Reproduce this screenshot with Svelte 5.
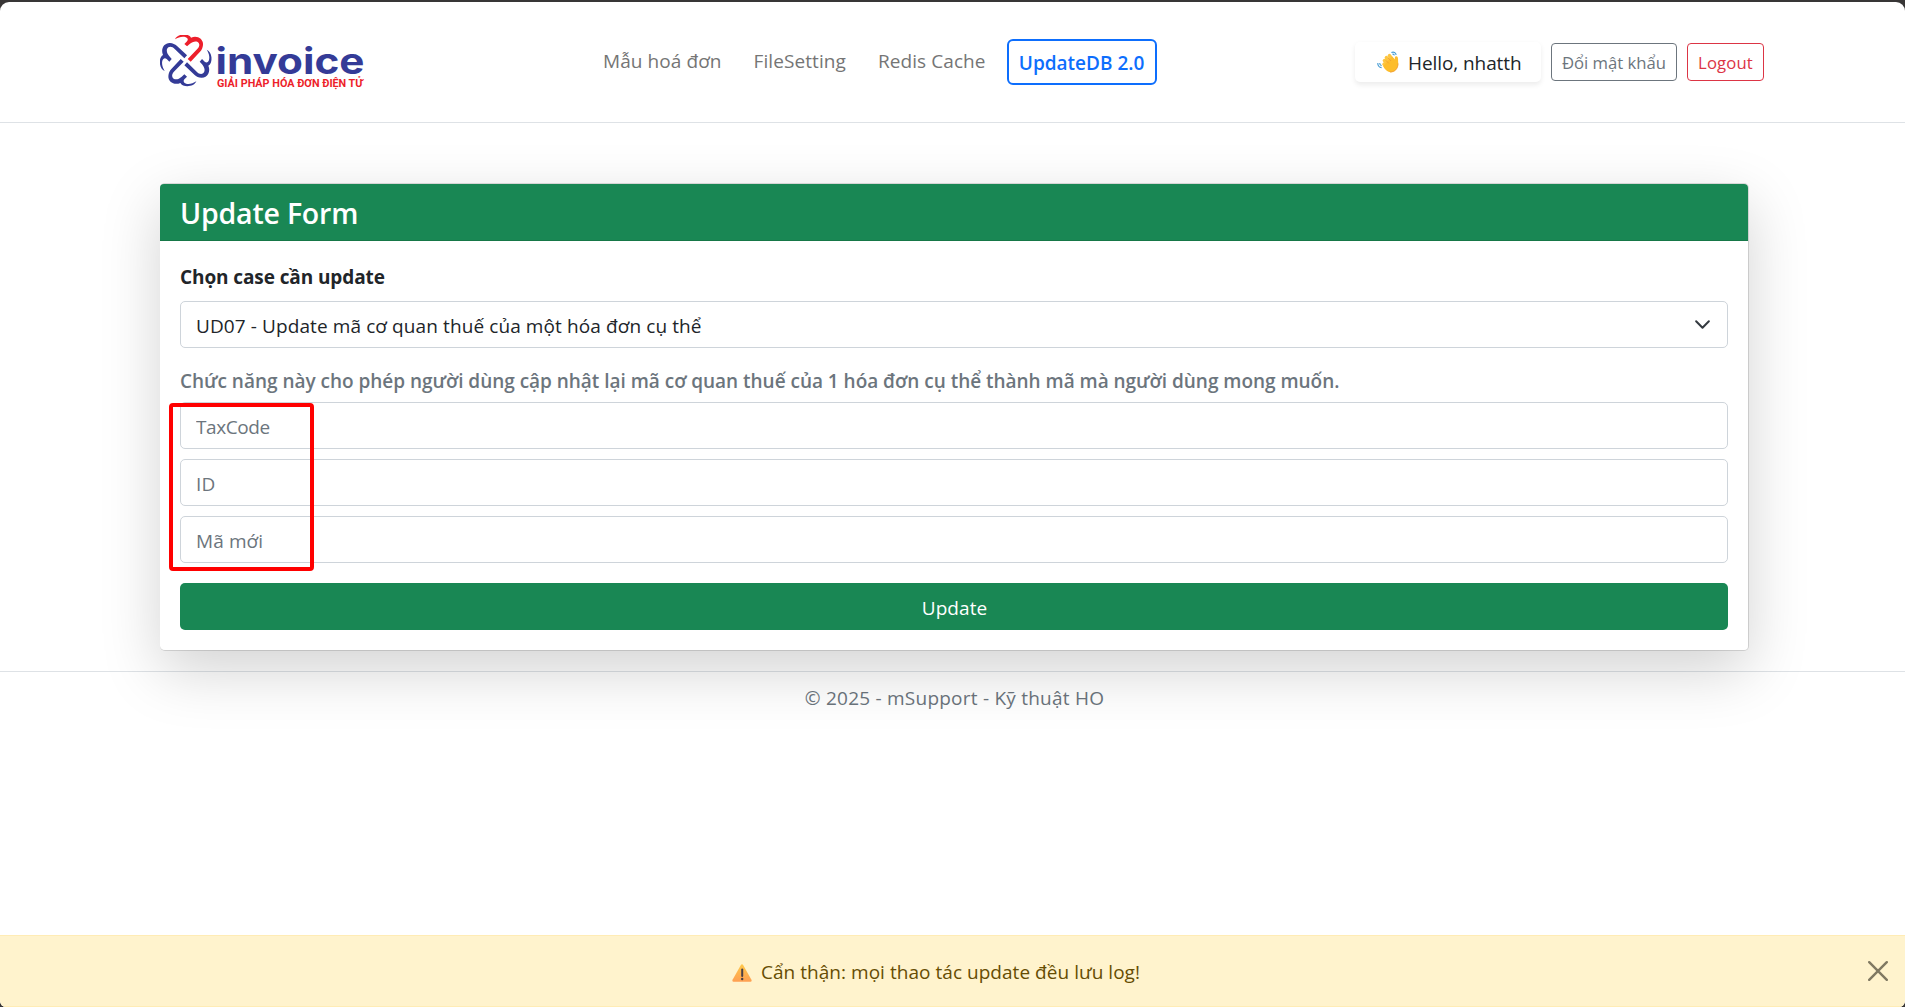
<script>
  const links = ['Mẫu hoá đơn', 'FileSetting', 'Redis Cache'];
  const fields = ['TaxCode', 'ID', 'Mã mới'];
  const petals = [
    { angle: 0, color: '#ed1f2b' },
    { angle: 90, color: '#343b97' },
    { angle: 180, color: '#343b97' },
    { angle: 270, color: '#343b97' }
  ];
</script>

<div class="window">
  <header>
    <div class="logo">
      <svg width="54" height="54" viewBox="0 0 54 54" aria-hidden="true">
        <g transform="translate(25.7 25.3) scale(0.3333)">
          {#each petals as p}
            <g transform="rotate({p.angle})" fill={p.color}>
              <path d="M-32 -63 C-26 -80 8 -83 16 -68 C34 -76 53 -65 52 -47 C51 -39 49 -32 43 -26 L15 4 L6 -4 L34 -33 C40 -39 43 -46 39 -52 C33 -60 21 -57 12 -49 L4 -42 L-4 -49 L4 -57 C7 -61 7 -64 4 -67 C-4 -74 -20 -71 -32 -63 Z" />
            </g>
          {/each}
        </g>
      </svg>
      <svg class="words" width="152" height="54" viewBox="0 0 152 54" aria-label="invoice">
        <text class="brand" x="1.5" y="38.7" textLength="149" lengthAdjust="spacingAndGlyphs">invoice</text>
        <text class="tagline" x="3" y="51.9" textLength="146" lengthAdjust="spacingAndGlyphs">GIẢI PHÁP HÓA ĐƠN ĐIỆN TỬ</text>
      </svg>
    </div>

    <nav>
      {#each links as link}
        <a href="#top">{link}</a>
      {/each}
      <a class="active" href="#top">UpdateDB 2.0</a>
    </nav>

    <div class="user">
      <div class="hello">
        <svg width="22" height="22" viewBox="0 0 22 22" aria-hidden="true">
          <path d="M7.4 9.6 L13 15 M9.4 6.6 L14 12 M12.4 4.6 L16 9.6 M7 13.2 L12 17" stroke="#fdc540" stroke-width="3.5" stroke-linecap="round" />
          <path d="M8 13 L15.2 5.6 L17.8 8.6 C17.6 6.6 18 5 19.4 5.2 C21.4 5.5 21 8.6 21.2 11.5 C21.5 17.8 17.6 21.6 13.2 21.2 C10 20.8 8 18.6 6 15 Z" fill="#fdbd2c" />
          <path d="M8.8 9.4 L11.8 12.4 M11.2 7 L14 10 M21 12.4 C21.2 17.8 17.3 21.4 13 20.9" fill="none" stroke="#f09a36" stroke-width="0.8" />
          <path d="M14.4 1.6 C16.6 0.4 19 1.6 19.1 4 M15.4 3.2 C16.4 3 17.2 3.6 17.4 4.4 M0.8 12 C0.6 14.6 2.2 16.6 4.6 16.6 M2.7 12 C2.7 13.6 3.4 14.4 4.6 14.6" fill="none" stroke="#459bd3" stroke-width="1.1" />
        </svg>
        <span>Hello, nhatth</span>
      </div>
      <button class="small">Đổi mật khẩu</button>
      <button class="small danger">Logout</button>
    </div>
  </header>

  <main>
    <h4>Update Form</h4>
    <form>
      <label for="case">Chọn case cần update</label>
      <div class="select">
        <select id="case">
          <option>UD07 - Update mã cơ quan thuế của một hóa đơn cụ thể</option>
        </select>
        <svg width="17" height="17" viewBox="0 0 16 16" aria-hidden="true">
          <path d="m2 5 6 6 6-6" fill="none" stroke="#343a40" stroke-width="1.9" stroke-linecap="round" stroke-linejoin="round" />
        </svg>
      </div>
      <p class="hint">Chức năng này cho phép người dùng cập nhật lại mã cơ quan thuế của 1 hóa đơn cụ thể thành mã mà người dùng mong muốn.</p>
      <div class="fields">
        {#each fields as field}
          <input type="text" placeholder={field} class:tight={field === 'TaxCode'} />
        {/each}
        <div class="marker"></div>
      </div>
      <button class="submit" type="button">Update</button>
    </form>
  </main>

  <footer>© 2025 - mSupport - Kỹ thuật HO</footer>

  <div class="alert" role="alert">
    <div class="message">
      <svg width="20" height="18" viewBox="0 0 20 18" aria-hidden="true">
        <defs>
          <linearGradient id="warn" x1="0" y1="0" x2="0" y2="1">
            <stop offset="0" stop-color="#ffc84a" />
            <stop offset="1" stop-color="#ff9f52" />
          </linearGradient>
        </defs>
        <path d="M10 0.3 Q10.7 0.3 11.1 1 L19.6 16 Q20 17.7 18.6 17.8 H1.4 Q0 17.7 0.4 16 L8.9 1 Q9.3 0.3 10 0.3 Z" fill="url(#warn)" />
        <path d="M10.2 5.5 V12" stroke="#4a3f45" stroke-width="2" stroke-linecap="round" />
        <circle cx="10.2" cy="15" r="1.2" fill="#4a3f45" />
      </svg>
      <span>Cẩn thận: mọi thao tác update đều lưu log!</span>
    </div>
    <button class="close" aria-label="Close">
      <svg width="20" height="20" viewBox="0 0 20 20">
        <path d="M1.2 1.2 L18.8 18.8 M18.8 1.2 L1.2 18.8" stroke="#807962" stroke-width="2.4" stroke-linecap="round" />
      </svg>
    </button>
  </div>
</div>

<style>
  :global(body) {
    background: #383636;
  }
  :global(#app) {
    display: flow-root;
  }
  .window {
    box-sizing: border-box;
    display: flex;
    flex-direction: column;
    height: 1005px;
    margin-top: 2px;
    overflow: hidden;
    background: #fff;
    border-radius: 9px 9px 6px 6px;
    color: #212529;
    font: 19px/30px 'Open Sans', 'Noto Sans', sans-serif;
  }
  header {
    display: flex;
    align-items: center;
    height: 120px;
    padding: 0 141px 0 160px;
    border-bottom: 1px solid #dee2e6;
  }
  .logo {
    display: flex;
    flex: none;
    margin-right: 237px;
  }
  .words {
    overflow: visible;
  }
  .brand {
    font: 700 36.5px Inter, sans-serif;
    fill: #343b97;
  }
  .tagline {
    font: 700 10.2px Roboto, sans-serif;
    fill: #ed1f2b;
  }
  nav {
    display: flex;
    align-items: center;
    gap: 32px;
  }
  nav a {
    padding-bottom: 3px;
    color: #757575;
    letter-spacing: 0.08px;
    text-decoration: none;
    white-space: nowrap;
  }
  nav .active {
    box-sizing: border-box;
    width: 150px;
    height: 46px;
    margin-left: -11px;
    padding: 7px 0 0;
    border: 2px solid #0d6efd;
    border-radius: 6px;
    color: #0d6efd;
    font-weight: 600;
    letter-spacing: 0;
    text-align: center;
  }
  .user {
    display: flex;
    align-items: center;
    gap: 10px;
    margin-left: auto;
  }
  .hello {
    box-sizing: border-box;
    display: flex;
    align-items: center;
    gap: 9px;
    width: 186px;
    height: 40px;
    padding-left: 22px;
    border-radius: 5px;
    box-shadow: 0 2.5px 5px rgba(0, 0, 0, 0.075);
    white-space: nowrap;
  }
  .hello span {
    padding-top: 1px;
    letter-spacing: -0.08px;
  }
  button {
    padding: 0;
    border: 0;
    background: none;
    font: inherit;
  }
  .small {
    width: 126px;
    height: 38px;
    padding-top: 1px;
    border: 1px solid #6c757d;
    border-radius: 4px;
    color: #6c757d;
    font-size: 16.7px;
    line-height: 26px;
    white-space: nowrap;
  }
  .small.danger {
    width: 77px;
    border-color: #dc3545;
    color: #dc3545;
    letter-spacing: 0.15px;
  }
  main {
    position: relative;
    z-index: 1;
    margin: 60px 156px 20px 160px;
    border: 1px solid rgba(0, 0, 0, 0.125);
    border-left-width: 0;
    border-radius: 5px;
    background: #fff;
    background-clip: padding-box;
    box-shadow: 0 20px 60px rgba(0, 0, 0, 0.175);
  }
  h4 {
    box-sizing: border-box;
    height: 57px;
    margin: 0;
    padding: 1px 20px 0;
    border-bottom: 1px solid #167748;
    border-radius: 4px 4px 0 0;
    background: #198754;
    color: #fff;
    font-size: 28.5px;
    font-weight: 600;
    line-height: 57px;
    letter-spacing: -0.2px;
  }
  form {
    display: flex;
    flex-direction: column;
    padding: 21px 20px 20px;
  }
  label {
    margin-bottom: 9px;
    font-weight: 700;
    letter-spacing: -0.1px;
  }
  .select {
    display: grid;
    align-items: center;
  }
  .select select,
  .select svg {
    grid-area: 1 / 1;
  }
  .select svg {
    justify-self: end;
    margin-right: 17px;
    pointer-events: none;
  }
  select,
  input {
    box-sizing: border-box;
    width: 100%;
    height: 47px;
    margin: 0;
    padding: 2px 15px 0;
    border: 1px solid #ced4da;
    border-radius: 5px;
    background: #fff;
    color: #212529;
    font: inherit;
    letter-spacing: 0.1px;
  }
  select {
    appearance: none;
    opacity: 1;
  }
  .hint {
    margin: 18px 0 6px;
    color: #6c757d;
    font-weight: 600;
    letter-spacing: -0.025px;
    white-space: nowrap;
  }
  .fields {
    position: relative;
    display: flex;
    flex-direction: column;
    gap: 10px;
  }
  input::placeholder {
    color: #6c757d;
    opacity: 1;
  }
  input.tight {
    letter-spacing: -0.4px;
  }
  .marker {
    position: absolute;
    box-sizing: border-box;
    top: 1px;
    left: -11px;
    width: 145px;
    height: 168px;
    border: 4px solid #f00;
    border-radius: 4px;
    pointer-events: none;
  }
  .submit {
    height: 47px;
    margin-top: 20px;
    padding: 2px 0 0 1px;
    border-radius: 5px;
    background: #198754;
    color: #fff;
    letter-spacing: 0.05px;
  }
  footer {
    height: 50px;
    padding: 11px 0 0 4px;
    border-top: 1px solid #dee2e6;
    color: #6c757d;
    letter-spacing: 0.23px;
    text-align: center;
  }
  .alert {
    box-sizing: border-box;
    display: grid;
    grid-template-columns: 1fr auto;
    align-items: center;
    height: 72px;
    margin-top: auto;
    padding: 0 17px 0 0;
    border: solid #ffecb5;
    border-width: 1px 0;
    background: #fff3cd;
    color: #664d03;
  }
  .message {
    display: flex;
    align-items: center;
    justify-content: center;
    gap: 9px;
    padding: 2px 0 0 4px;
    letter-spacing: 0.04px;
  }
  .message svg {
    margin-top: 2px;
  }
  .close {
    display: flex;
  }
</style>
